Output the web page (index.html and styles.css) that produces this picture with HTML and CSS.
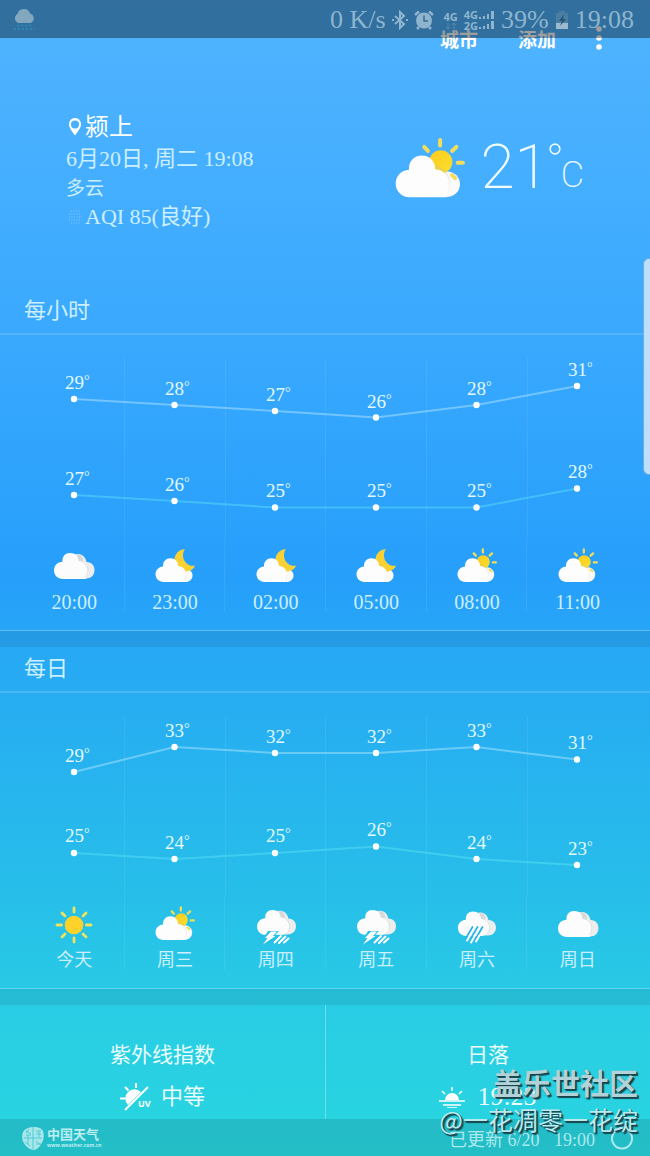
FILE: index.html
```html
<!DOCTYPE html>
<html lang="zh-CN">
<head>
<meta charset="utf-8">
<meta name="viewport" content="width=device-width, initial-scale=1">
<title>天气</title>
<link rel="stylesheet" href="styles.css">
</head>
<body>
<svg class="defs" aria-hidden="true">
  <defs>
    <linearGradient id="sunFill" x1="0" y1="0" x2="1" y2="1"><stop offset="0" stop-color="#fdcb1f"/><stop offset="1" stop-color="#f9df2c"/></linearGradient>
    <g id="partlyArt">
      <path d="M180 227V150H208C232 150 248 168 248 188C248 211 230 227 208 227Z" fill="#fafafa"/>
      <g stroke="#f2dc5b" stroke-width="12" stroke-linecap="round"><path d="M188 55V72M140 76L151 88M237 76L224 88M241 124H257M224 161L233 170"/></g>
      <circle cx="190" cy="121" r="35" fill="url(#sunFill)"/>
      <path d="M176 130C196 140 205 147 208 154C222 175 222 200 205 220L176 220Z" fill="#d7bc9c" opacity=".3"/>
      <path d="M96 228C72 228 54 209 54 187C54 164 71 146 94 145C92 119 110 102 133 102C157 102 174 120 173 143C198 144 216 163 216 187C216 205 207 217 207 228Z" fill="#fdfdfd"/>
    </g>
    <symbol id="partly" viewBox="0 0 60 54"><use href="#partlyArt" transform="translate(.3 1) scale(.189)"/></symbol>
    <symbol id="night" viewBox="0 0 60 54">
      <path d="M34 44V31H41C45 31 47.500 34 47.500 37.500C47.500 41.500 44 44 41 44Z" fill="#fafafa"/>
      <path d="M39.800 11C33 11.500 29 17 29.500 23C30 30 36 34 41 33.500C46 33 49 30.500 50 27.500C42 29.500 34.500 20 39.800 11Z" fill="#f8d235"/>
      <path d="M38 31C42 34 42 39 39 43L35 43Z" fill="#d8bea5" opacity=".5"/>
      <path d="M18.400 44C13.900 44 10.500 40.500 10.500 36.300C10.500 32 13.700 28.600 18 28.400C17.700 23.500 21.100 20.200 25.400 20.200C30 20.200 33.200 23.700 33 28C37.700 28.200 41 31.800 41 36.300C41 40 39 42 39 44Z" fill="#fdfdfd"/>
    </symbol>
    <g id="twinClouds">
      <path d="M27 40V20C29 14 41 14 42.500 24C48 24 50.500 28 50.500 32C50.500 37 47 40.500 42 40.500Z" fill="#eceeee"/>
      <path d="M33 16C39 17 40 22 38.500 24C46 27 46 36 40 40L32 39Z" fill="#cfcfd2" opacity=".7"/>
      <path d="M19 41C13.500 41 10 37 10 32.500C10 27.500 13.500 24 18.500 23.800C18 18 21.500 15 26 15C31.500 15 34.500 18.500 34.500 23C40 23.500 43.500 27.500 43.500 32C43.500 37.500 40 41 35 41Z" fill="#fcfcfc"/>
    </g>
    <symbol id="cloudy" viewBox="0 0 60 54"><use href="#twinClouds"/><path d="M18 39H42V41H18Z" fill="#fcfcfc"/></symbol>
    <symbol id="storm" viewBox="0 0 60 54">
      <use href="#twinClouds" transform="translate(1.500 -.500) scale(.96)"/>
      <path d="M22 35H33L29 39H43L36 48H14L20 41.500H18Z" fill="#27c0e9"/>
      <path d="M25 35.500H31L27 40H29.500L17 48.500L21.500 42H19Z" fill="#fff"/>
      <path d="M35 40L28.500 46.500M39.500 40.500L33 47M42.500 42.500L38 46.500" stroke="#fff" stroke-width="2" stroke-linecap="round"/>
    </symbol>
    <symbol id="rain" viewBox="0 0 60 54">
      <use href="#twinClouds" transform="translate(1.500 1.500) scale(.94)"/>
      <path d="M25.500 31L19 42M30.500 31L23.500 43M35.500 31L28.500 43" stroke="#27b5e4" stroke-width="1.700" stroke-linecap="round"/>
      <path d="M23 39.500L20 44.500M28 39.500L24 46.500M32.500 39.500L29 45.500" stroke="#fff" stroke-width="2" stroke-linecap="round"/>
    </symbol>
    <symbol id="sunny" viewBox="0 0 60 54">
      <circle cx="30" cy="29" r="9.300" fill="#fdd32b"/>
      <path d="M30 12V16M30 42V46M13 29H17.500M42.500 29H47M18 17L21 20M39 38L42 41M42 17L39 20M21 38L18 41" stroke="#f2e35c" stroke-width="2.800" stroke-linecap="round"/>
    </symbol>
  </defs>
</svg>

<main class="app">
  <div class="status">
    <svg class="status-rain" viewBox="0 0 24 24" aria-hidden="true"><path d="M6 15A5 5 0 0 1 5.500 6A6.500 6.500 0 0 1 18 5.500A5 5 0 0 1 18.500 15Z" fill="#83a7bf"/><path d="M5 17.500H20M2 21H23" stroke="#2e86b8" stroke-width="2" stroke-dasharray="2 2"/></svg>
    <div class="status-info">
      <span>0 K/s</span>
      <svg class="i-bt" viewBox="0 0 16 20" aria-hidden="true"><path d="M3 6L12 14L8 18V2L12 6L3 14M0 10H2M14 10H16" fill="none" stroke="currentColor" stroke-width="2"/></svg>
      <svg class="i-alarm" viewBox="0 0 20 20" aria-hidden="true"><circle cx="10" cy="10.500" r="8" fill="currentColor"/><path d="M1 5L5 1.500M19 5L15 1.500M5 17L3 19M15 17L17 19" stroke="currentColor" stroke-width="2.500"/><path d="M10 5.500V11H14" fill="none" stroke="#326f9d" stroke-width="1.500"/></svg>
      <span class="net lead">4G<svg viewBox="0 0 12 8" aria-hidden="true"><path d="M3 1V7M1 5L3 7L5 5M9 7V1M7 3L9 1L11 3" fill="none" stroke="#568aad"/></svg></span>
      <span class="net"><span>4G</span><span>2G</span></span>
      <svg class="i-signal" viewBox="0 0 17 20" aria-hidden="true"><path d="M1 7H3V9H1ZM5 6H7V9H5ZM9 4H11V9H9ZM13 1H16V9H13ZM1 17H3V19H1ZM5 16H7V19H5ZM9 14H11V19H9ZM13 11H16V19H13Z" fill="currentColor"/></svg>
      <span>39%</span>
      <svg class="i-battery" viewBox="0 0 14 20" aria-hidden="true"><path d="M4 1H10V3H13V19H1V3H4Z" fill="#4b7fa2"/><path d="M1 13H13V19H1Z" fill="#9bbacd"/><path d="M9 4L4 11H7L5 16L11 9H8Z" fill="#285578"/></svg>
      <time>19:08</time>
    </div>
  </div>

  <header class="toolbar">
    <button type="button">城市</button>
    <button type="button">添加</button>
    <button type="button" class="more" aria-label="更多"><svg viewBox="0 0 6 26" aria-hidden="true"><circle cx="3" cy="4" r="2.800"/><circle cx="3" cy="13" r="2.800"/><circle cx="3" cy="22" r="2.800"/></svg></button>
  </header>

  <section class="current">
    <div class="place">
      <h1><svg class="i-pin" viewBox="0 0 14 18" aria-hidden="true"><path fill-rule="evenodd" d="M7 0C3 0 1 3 1 6.500C1 10 4 13 7 17.500C10 13 13 10 13 6.500C13 3 11 0 7 0ZM7 2.500A4 4 0 1 1 7 10.500A4 4 0 0 1 7 2.500Z" fill="#fff"/></svg>颍上</h1>
      <p class="date">6月20日, 周二 19:08</p>
      <p class="sky">多云</p>
      <p class="aqi"><svg class="i-dust" viewBox="0 0 14 14" aria-hidden="true"><path d="M3 1H12M1 4H14M1 7H14M1 10H14M3 13H12" stroke="#88cbff" stroke-dasharray="1 1.500" stroke-width="1.200"/></svg>AQI 85(良好)</p>
    </div>
    <div class="now">
      <svg class="now-icon" viewBox="52 46 214 184" role="img" aria-label="多云"><use href="#partlyArt"/></svg>
      <span class="now-temp">21</span>
      <span class="unit"><svg viewBox="0 0 12 12" aria-hidden="true"><circle cx="6" cy="6" r="4.800" fill="none" stroke="#f0fcff" stroke-width="1.700"/></svg><span>C</span></span>
    </div>
  </section>

  <section class="forecast">
    <h2>每小时</h2>
    <div class="plot">
      <svg class="chart" viewBox="0 0 604 180" role="img" aria-label="每小时气温">
        <path class="grid" d="M100.500 0V180M201.500 0V180M301.500 0V180M402.500 0V180M503.500 0V180"/>
        <polyline class="high" points="50,41 150.500,47 251,53 352,59.500 452.500,47 553,28"/>
        <polyline class="low" points="50,137 150.500,143 251,149.500 352,149.500 452.500,149.500 553,130.500"/>
        <g class="dots"><circle cx="50" cy="41" r="3.200"/><circle cx="150.500" cy="47" r="3.200"/><circle cx="251" cy="53" r="3.200"/><circle cx="352" cy="59.500" r="3.200"/><circle cx="452.500" cy="47" r="3.200"/><circle cx="553" cy="28" r="3.200"/><circle cx="50" cy="137" r="3.200"/><circle cx="150.500" cy="143" r="3.200"/><circle cx="251" cy="149.500" r="3.200"/><circle cx="352" cy="149.500" r="3.200"/><circle cx="452.500" cy="149.500" r="3.200"/><circle cx="553" cy="130.500" r="3.200"/></g>
        <g class="temps"><text x="41" y="31">29<tspan>°</tspan></text><text x="141" y="37">28<tspan>°</tspan></text><text x="242" y="43">27<tspan>°</tspan></text><text x="343" y="50">26<tspan>°</tspan></text><text x="443" y="37">28<tspan>°</tspan></text><text x="544" y="18">31<tspan>°</tspan></text><text x="41" y="127">27<tspan>°</tspan></text><text x="141" y="133">26<tspan>°</tspan></text><text x="242" y="139">25<tspan>°</tspan></text><text x="343" y="139">25<tspan>°</tspan></text><text x="443" y="139">25<tspan>°</tspan></text><text x="544" y="120">28<tspan>°</tspan></text></g>
      </svg>
      <ol class="slots">
        <li><svg><use href="#cloudy"/></svg><time>20:00</time></li>
        <li><svg><use href="#night"/></svg><time>23:00</time></li>
        <li><svg><use href="#night"/></svg><time>02:00</time></li>
        <li><svg><use href="#night"/></svg><time>05:00</time></li>
        <li><svg><use href="#partly"/></svg><time>08:00</time></li>
        <li><svg><use href="#partly"/></svg><time>11:00</time></li>
      </ol>
    </div>
  </section>

  <section class="forecast daily">
    <h2>每日</h2>
    <div class="plot">
      <svg class="chart" viewBox="0 0 604 180" role="img" aria-label="每日气温">
        <path class="grid" d="M100.500 0V180M201.500 0V180M301.500 0V180M402.500 0V180M503.500 0V180"/>
        <polyline class="high" points="50,56 150.500,31 251,37 352,37 452.500,31 553,43.500"/>
        <polyline class="low" points="50,137 150.500,143 251,137 352,130.500 452.500,143 553,149"/>
        <g class="dots"><circle cx="50" cy="56" r="3.200"/><circle cx="150.500" cy="31" r="3.200"/><circle cx="251" cy="37" r="3.200"/><circle cx="352" cy="37" r="3.200"/><circle cx="452.500" cy="31" r="3.200"/><circle cx="553" cy="43.500" r="3.200"/><circle cx="50" cy="137" r="3.200"/><circle cx="150.500" cy="143" r="3.200"/><circle cx="251" cy="137" r="3.200"/><circle cx="352" cy="130.500" r="3.200"/><circle cx="452.500" cy="143" r="3.200"/><circle cx="553" cy="149" r="3.200"/></g>
        <g class="temps"><text x="41" y="46">29<tspan>°</tspan></text><text x="141" y="21">33<tspan>°</tspan></text><text x="242" y="27">32<tspan>°</tspan></text><text x="343" y="27">32<tspan>°</tspan></text><text x="443" y="21">33<tspan>°</tspan></text><text x="544" y="33">31<tspan>°</tspan></text><text x="41" y="126">25<tspan>°</tspan></text><text x="141" y="133">24<tspan>°</tspan></text><text x="242" y="126">25<tspan>°</tspan></text><text x="343" y="120">26<tspan>°</tspan></text><text x="443" y="133">24<tspan>°</tspan></text><text x="544" y="139">23<tspan>°</tspan></text></g>
      </svg>
      <ol class="slots">
        <li><svg><use href="#sunny"/></svg><span>今天</span></li>
        <li><svg><use href="#partly"/></svg><span>周三</span></li>
        <li><svg><use href="#storm"/></svg><span>周四</span></li>
        <li><svg><use href="#storm"/></svg><span>周五</span></li>
        <li><svg><use href="#rain"/></svg><span>周六</span></li>
        <li><svg><use href="#cloudy"/></svg><span>周日</span></li>
      </ol>
    </div>
  </section>

  <section class="details">
    <div class="detail">
      <h3>紫外线指数</h3>
      <p class="uv"><svg viewBox="0 0 32 28" aria-hidden="true"><path d="M8 22A7.500 7.500 0 1 1 21 9Z" fill="#fff"/><path d="M5 27L28 4M0 15.500H5.500M5 4L8.500 7.500M16 0V5" stroke="#fff" stroke-width="2"/><text x="18" y="24">UV</text></svg>中等</p>
    </div>
    <div class="detail">
      <h3>日落</h3>
      <p class="sunset"><svg viewBox="0 0 26 22" aria-hidden="true"><path d="M6 14A7 7 0 0 1 20 14Z" fill="#fff"/><path d="M0 15H26M4 19H22M13 1V5M3 5L6 8M23 5L20 8M8 22H18" stroke="#fff" stroke-width="1.500"/></svg><time>19:23</time></p>
    </div>
  </section>

  <footer class="footer">
    <a class="brand" href="#">
      <svg viewBox="0 0 24 26" aria-hidden="true"><path d="M2 7C5 1 19 0 22 6C25 14 19 24 13 25C4 24-1 14 2 7Z" fill="#a8e6ea"/><path d="M12 2V24M3 13H21M5 6L10 9M5 10H10M7 10V19M15 6H20M15 9H20M18 6V12M15 16L20 20M15 19H20M4 17L9 21M8 4L5 8" fill="none" stroke="#4fccd5" stroke-width="1"/></svg>
      <span class="brand-text"><b>中国天气</b><small>www.weather.com.cn</small></span>
    </a>
    <span class="updated">已更新 6/20 <time>19:00</time></span>
    <button class="refresh" type="button" aria-label="刷新"><svg viewBox="0 0 24 24" aria-hidden="true"><path d="M15 3A10 10 0 1 1 9 3L12 1" fill="none" stroke="#ace9ed" stroke-width="2"/></svg></button>
  </footer>

  <div class="edge-handle"></div>
  <div class="watermark"><strong>盖乐世社区</strong><span>@一花凋零一花绽</span></div>
</main>
</body>
</html>
```

FILE: styles.css
```css
* { box-sizing: border-box; }
body {
  margin: 0;
  font-family: "Liberation Serif", "Noto Sans CJK SC", serif;
  color: #ccefff;
}
h1, h2, h3, p, ol { margin: 0; padding: 0; font-weight: 400; }
ol { list-style: none; }
svg { display: block; flex: none; }
button { border: 0; padding: 0; background: none; color: inherit; font: inherit; }
.defs { position: absolute; width: 0; height: 0; }

.app {
  position: relative;
  display: flex;
  flex-direction: column;
  min-height: 100vh;
  overflow: hidden;
  background: linear-gradient(#51b4ff 0, #3caafe 26%, #269ffb 50%, #27a9f4 57%, #27bfe9 78%, #29cde4 88%, #28d6df 100%);
}

/* System status bar, laid over the app's own toolbar */
.status {
  position: absolute;
  inset: 0 0 auto;
  z-index: 2;
  display: flex;
  justify-content: space-between;
  align-items: center;
  height: 38px;
  padding: 2px 16px 0 12px;
  background: rgba(0, 0, 0, .38);
  color: #8fb5ce;
  font-size: 26px;
}
.status-rain { width: 24px; height: 24px; }
.status-info { display: flex; align-items: center; gap: 6px; white-space: nowrap; }
.i-bt { width: 16px; height: 20px; }
.i-alarm { width: 20px; height: 20px; }
.i-signal { width: 17px; height: 20px; margin-left: -6px; }
.i-battery { width: 14px; height: 20px; }
.net {
  display: flex;
  flex-direction: column;
  align-items: center;
  font: 700 11px/11px "Open Sans", sans-serif;
}
.net.lead { margin-left: 4px; }
.net svg { width: 12px; height: 8px; }

.toolbar {
  display: flex;
  justify-content: flex-end;
  align-items: center;
  height: 76px;
  padding-right: 48px;
  gap: 40px;
  color: #fff;
  font-size: 19px;
  font-weight: 700;
}
.toolbar svg { width: 6px; height: 26px; fill: #fff; }

.current {
  display: flex;
  justify-content: space-between;
  align-items: flex-start;
  padding: 35px 66px 0;
}
.place { font-size: 22px; white-space: nowrap; }
.place h1 { display: flex; align-items: center; gap: 3px; padding-left: 2px; font-size: 24px; line-height: 32px; color: #fff; }
.i-pin { width: 14px; height: 18px; }
.date { line-height: 32px; }
.sky { font-size: 19px; line-height: 28px; }
.aqi { display: flex; align-items: center; gap: 3px; padding-left: 2px; line-height: 28px; }
.i-dust { width: 14px; height: 14px; }
.now { display: flex; align-items: center; height: 60px; margin-top: 26px; color: #f0fcff; font-family: Roboto, sans-serif; font-weight: 200; }
.now-icon { width: 71px; height: 61px; }
.now-temp { margin-left: 14px; font-size: 62px; line-height: 60px; }
.unit { display: flex; align-self: stretch; padding-top: 6px; }
.unit svg { width: 12px; height: 12px; }
.unit span { padding-top: 10px; font-size: 36px; line-height: 44px; }

.forecast { border-bottom: 1px solid rgba(255, 255, 255, .25); margin-top: 58px; }
.forecast.daily { margin-top: 0; }
.forecast h2 {
  padding-left: 24px;
  border-bottom: 2px solid rgba(255, 255, 255, .15);
  font-size: 22px;
  line-height: 44px;
}
.plot { padding: 23px 22px 18px 24px; }
.chart { width: 100%; height: auto; }
.grid { stroke: rgba(255, 255, 255, .08); stroke-width: 1; }
.high, .low { fill: none; stroke-width: 2; }
.high { stroke: rgba(190, 235, 255, .45); }
.low { stroke: rgba(100, 235, 245, .4); }
.dots { fill: #fff; }
.temps { fill: #e2f9ff; font-size: 19px; }
.temps tspan { font-size: 14px; baseline-shift: 4px; }
.slots { display: grid; grid-template-columns: repeat(6, 1fr); }
.slots li { display: flex; flex-direction: column; align-items: center; font-size: 20px; line-height: 20px; }
.slots li + li { box-shadow: -1px 0 rgba(255, 255, 255, .08); }
.slots svg { width: 60px; height: 54px; }
.daily .slots li { font-size: 18px; }
.daily, .details { border-top: 16px solid rgba(0, 0, 0, .07); }

.details { display: grid; grid-template-columns: 1fr 1fr; flex: 1; color: #eafdff; }
.detail { display: flex; flex-direction: column; align-items: center; gap: 14px; padding: 36px 0 8px; }
.detail + .detail { border-left: 1px solid rgba(255, 255, 255, .3); }
.detail h3 { font-size: 21px; line-height: 28px; }
.detail p { display: flex; align-items: center; font-size: 22px; line-height: 28px; }
.uv { gap: 9px; }
.uv svg { width: 32px; height: 28px; }
.uv text { fill: #fff; font: 700 9px "Open Sans", sans-serif; }
.detail .sunset { gap: 12px; font-size: 26px; }
.sunset svg { width: 26px; height: 22px; }

.footer {
  display: flex;
  align-items: center;
  height: 37px;
  padding: 0 16px 0 21px;
  background: rgba(0, 0, 0, .11);
  color: #ace9ed;
}
.brand { display: flex; align-items: center; gap: 2px; margin-right: auto; color: #bcedf1; text-decoration: none; }
.brand svg { width: 24px; height: 26px; }
.brand-text { display: flex; flex-direction: column; }
.brand b { font-size: 13px; font-weight: 700; line-height: 14px; }
.brand small { font: 700 5px/6px "Open Sans", sans-serif; }
.updated { font-size: 18px; white-space: nowrap; }
.updated time { margin-left: 10px; }
.refresh { margin-left: 15px; }
.refresh svg { width: 24px; height: 24px; }

.edge-handle {
  position: absolute;
  top: 258px;
  right: 0;
  width: 7px;
  height: 217px;
  border: 1px solid #6faedb;
  border-right: 0;
  border-radius: 6px 0 0 6px;
  background: #bbdffc;
}
.watermark {
  position: absolute;
  right: 12px;
  bottom: 18px;
  display: flex;
  flex-direction: column;
  align-items: flex-end;
  color: #b2d2d9;
  font-family: "Noto Sans CJK SC", sans-serif;
  text-shadow: 1px 1px 1px #17454d, 2px 2px 1px #17454d;
  white-space: nowrap;
  pointer-events: none;
}
.watermark strong { font-size: 29px; line-height: 36px; font-weight: 700; }
.watermark span { font-size: 25px; line-height: 38px; color: #b9eaf0; }
```
